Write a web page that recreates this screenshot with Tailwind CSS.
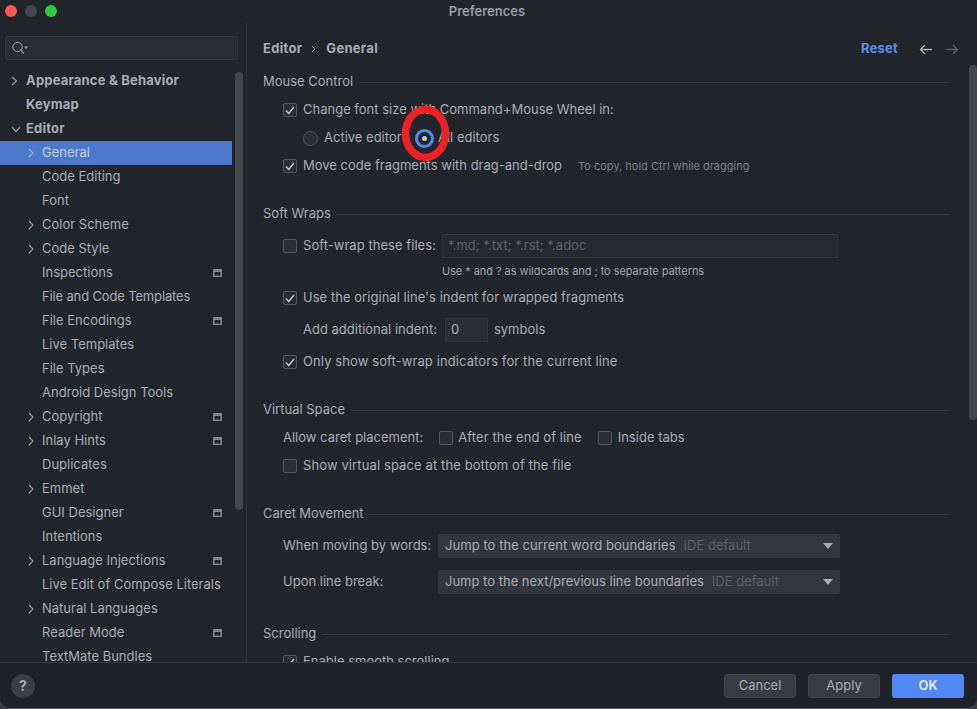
<!DOCTYPE html>
<html>
<head>
<meta charset="utf-8">
<script src="https://cdn.jsdelivr.net/npm/@tailwindcss/browser@4"></script>
</head>
<body class="bg-[#3a3c40]">
<div class="relative w-[977px] h-[709px] overflow-hidden flex flex-col bg-[#22252c] rounded-b-[10px] font-['Inter','Liberation_Sans',sans-serif] text-[13px] text-[#a9adb6] border-b border-[#55575b]">
  <!-- title bar -->
  <div class="relative h-[22px] shrink-0 flex items-center justify-center pt-px pr-[3px]">
    <div class="absolute left-[5px] top-[5px] flex gap-[8px]">
      <span class="w-3 h-3 rounded-full bg-[#fc5753]"></span>
      <span class="w-3 h-3 rounded-full bg-[#43464c]"></span>
      <span class="w-3 h-3 rounded-full bg-[#2ac940]"></span>
    </div>
    <span class="text-[13px] font-semibold text-[#9a9da4]">Preferences</span>
  </div>
  <!-- body -->
  <div class="flex h-[640px] shrink-0">
    <!-- sidebar -->
    <div class="relative w-[247px] shrink-0 border-r border-[#2f3239] overflow-hidden pt-[14px]">
      <div class="ml-[5px] w-[233px] h-[24px] flex items-center pl-[5px] bg-[#2a2d35] border border-[#32353c] rounded-[2px]">
        <svg width="18" height="16" viewBox="0 0 18 16" fill="none"><circle cx="6.5" cy="7" r="4.6" stroke="#9a9ea6" stroke-width="1"/><path d="M10 10.5l3 3" stroke="#9a9ea6" stroke-width="1.3"/><path d="M13 6.5h4l-2 2.4z" fill="#9a9ea6"/></svg>
      </div>
      <div class="mt-[8px] pt-px w-[232px]">
        <div class="h-[24px] flex items-center font-bold tracking-[0.2px]"><svg class="ml-[11px] mr-[8px]" width="7" height="10" viewBox="0 0 7 10" fill="none"><path d="M1 1l4.5 4-4.5 4" stroke="#9a9ea6" stroke-width="1.2"/></svg>Appearance &amp; Behavior</div>
        <div class="h-[24px] flex items-center font-bold tracking-[0.2px] pl-[26px]">Keymap</div>
        <div class="h-[24px] flex items-center font-bold tracking-[0.2px]"><svg class="ml-[11px] mr-[5px]" width="10" height="7" viewBox="0 0 10 7" fill="none"><path d="M1 1l4 4.5 4-4.5" stroke="#9a9ea6" stroke-width="1.2"/></svg>Editor</div>
        <div class="h-[24px] flex items-center bg-[#4d78cc] text-[#c4cddd]"><svg class="ml-[28px] mr-[8px]" width="6" height="10" viewBox="0 0 6 10" fill="none"><path d="M1 1l4 4-4 4" stroke="#a9b8d8" stroke-width="1.1"/></svg>General</div>
        <div class="h-[24px] flex items-center pl-[42px]">Code Editing</div>
        <div class="h-[24px] flex items-center pl-[42px]">Font</div>
        <div class="h-[24px] flex items-center"><svg class="ml-[28px] mr-[8px]" width="6" height="10" viewBox="0 0 6 10" fill="none"><path d="M1 1l4 4-4 4" stroke="#9a9ea6" stroke-width="1.1"/></svg>Color Scheme</div>
        <div class="h-[24px] flex items-center"><svg class="ml-[28px] mr-[8px]" width="6" height="10" viewBox="0 0 6 10" fill="none"><path d="M1 1l4 4-4 4" stroke="#9a9ea6" stroke-width="1.1"/></svg>Code Style</div>
        <div class="h-[24px] flex items-center justify-between pl-[42px] pr-[10px]">Inspections<svg width="9" height="8" viewBox="0 0 9 8"><path d="M0 0h9v8H0z" fill="#7f858f"/><path d="M1.5 3h6v3.5h-6z" fill="#22252c"/></svg></div>
        <div class="h-[24px] flex items-center pl-[42px] tracking-[-0.15px]">File and Code Templates</div>
        <div class="h-[24px] flex items-center justify-between pl-[42px] pr-[10px]">File Encodings<svg width="9" height="8" viewBox="0 0 9 8"><path d="M0 0h9v8H0z" fill="#7f858f"/><path d="M1.5 3h6v3.5h-6z" fill="#22252c"/></svg></div>
        <div class="h-[24px] flex items-center pl-[42px]">Live Templates</div>
        <div class="h-[24px] flex items-center pl-[42px]">File Types</div>
        <div class="h-[24px] flex items-center pl-[42px]">Android Design Tools</div>
        <div class="h-[24px] flex items-center justify-between pr-[10px]"><span class="flex items-center"><svg class="ml-[28px] mr-[8px]" width="6" height="10" viewBox="0 0 6 10" fill="none"><path d="M1 1l4 4-4 4" stroke="#9a9ea6" stroke-width="1.1"/></svg>Copyright</span><svg width="9" height="8" viewBox="0 0 9 8"><path d="M0 0h9v8H0z" fill="#7f858f"/><path d="M1.5 3h6v3.5h-6z" fill="#22252c"/></svg></div>
        <div class="h-[24px] flex items-center justify-between pr-[10px]"><span class="flex items-center"><svg class="ml-[28px] mr-[8px]" width="6" height="10" viewBox="0 0 6 10" fill="none"><path d="M1 1l4 4-4 4" stroke="#9a9ea6" stroke-width="1.1"/></svg>Inlay Hints</span><svg width="9" height="8" viewBox="0 0 9 8"><path d="M0 0h9v8H0z" fill="#7f858f"/><path d="M1.5 3h6v3.5h-6z" fill="#22252c"/></svg></div>
        <div class="h-[24px] flex items-center pl-[42px]">Duplicates</div>
        <div class="h-[24px] flex items-center"><svg class="ml-[28px] mr-[8px]" width="6" height="10" viewBox="0 0 6 10" fill="none"><path d="M1 1l4 4-4 4" stroke="#9a9ea6" stroke-width="1.1"/></svg>Emmet</div>
        <div class="h-[24px] flex items-center justify-between pl-[42px] pr-[10px]">GUI Designer<svg width="9" height="8" viewBox="0 0 9 8"><path d="M0 0h9v8H0z" fill="#7f858f"/><path d="M1.5 3h6v3.5h-6z" fill="#22252c"/></svg></div>
        <div class="h-[24px] flex items-center pl-[42px]">Intentions</div>
        <div class="h-[24px] flex items-center justify-between pr-[10px]"><span class="flex items-center"><svg class="ml-[28px] mr-[8px]" width="6" height="10" viewBox="0 0 6 10" fill="none"><path d="M1 1l4 4-4 4" stroke="#9a9ea6" stroke-width="1.1"/></svg>Language Injections</span><svg width="9" height="8" viewBox="0 0 9 8"><path d="M0 0h9v8H0z" fill="#7f858f"/><path d="M1.5 3h6v3.5h-6z" fill="#22252c"/></svg></div>
        <div class="h-[24px] flex items-center pl-[42px]">Live Edit of Compose Literals</div>
        <div class="h-[24px] flex items-center"><svg class="ml-[28px] mr-[8px]" width="6" height="10" viewBox="0 0 6 10" fill="none"><path d="M1 1l4 4-4 4" stroke="#9a9ea6" stroke-width="1.1"/></svg>Natural Languages</div>
        <div class="h-[24px] flex items-center justify-between pl-[42px] pr-[10px]">Reader Mode<svg width="9" height="8" viewBox="0 0 9 8"><path d="M0 0h9v8H0z" fill="#7f858f"/><path d="M1.5 3h6v3.5h-6z" fill="#22252c"/></svg></div>
        <div class="h-[24px] flex items-center pl-[42px]">TextMate Bundles</div>
      </div>
      <div class="absolute left-[235px] top-[50px] w-[8px] h-[438px] rounded-full bg-[#44474c]"></div>
    </div>
    <!-- content -->
    <div class="relative flex-1 flex flex-col overflow-hidden">
      <div class="h-[53px] shrink-0 flex items-center pt-px pl-[16px] pr-[18px]">
        <span class="font-bold tracking-[0.3px]">Editor</span>
        <svg class="ml-[9px] mr-[10px]" width="5" height="8" viewBox="0 0 5 8" fill="none"><path d="M1 1l3 3-3 3" stroke="#9a9ea6"/></svg>
        <span class="font-bold tracking-[0.3px]">General</span>
        <span class="ml-auto font-bold tracking-[0.2px] text-[#5c8fe6]">Reset</span>
        <svg class="ml-[21px]" width="13" height="11" viewBox="0 0 13 11" fill="none"><path d="M13 5.5H1.5M6 1L1.5 5.5 6 10" stroke="#a9adb6" stroke-width="1.4"/></svg>
        <svg class="ml-[14px]" width="13" height="11" viewBox="0 0 13 11" fill="none"><path d="M0 5.5h11.500M7 1l4.500 4.500L7 10" stroke="#5c5f65" stroke-width="1.4"/></svg>
      </div>
      <div class="pl-[16px] w-[702px]">
        <!-- Mouse Control -->
        <div class="h-[14px] flex items-center gap-[6px]"><span class="shrink-0">Mouse Control</span><span class="flex-1 h-px bg-[#34373e]"></span></div>
        <div class="h-[7px]"></div>
        <div class="h-[28px] flex items-center pl-[20px] gap-[6px]"><span class="w-[14px] h-[14px] rounded-[2px] border border-[#555961] bg-[#2a2d34] flex items-center justify-center"><svg width="10" height="9" viewBox="0 0 10 9" fill="none"><path d="M1 4.500l2.700 3L9 1" stroke="#c0c3ca" stroke-width="1.5"/></svg></span>Change font size with Command+Mouse Wheel in:</div>
        <div class="h-[28px] flex items-center pl-[40px]"><span class="w-[15px] h-[15px] rounded-full border border-[#555961] bg-[#2a2d34] mr-[6px]"></span><span class="w-[91px]">Active editor</span><span class="w-[19px] h-[19px] rounded-full border-[3px] border-[#5488e8] flex items-center justify-center mr-[4px]"><span class="w-[5px] h-[5px] rounded-full bg-[#c9ccd2]"></span></span>All editors</div>
        <div class="h-[28px] flex items-center pl-[20px] gap-[6px]"><span class="w-[14px] h-[14px] rounded-[2px] border border-[#555961] bg-[#2a2d34] flex items-center justify-center"><svg width="10" height="9" viewBox="0 0 10 9" fill="none"><path d="M1 4.500l2.700 3L9 1" stroke="#c0c3ca" stroke-width="1.5"/></svg></span>Move code fragments with drag-and-drop<span class="ml-[10px] text-[11px] text-[#7b7f87]">To copy, hold Ctrl while dragging</span></div>
        <div class="h-[27px]"></div>
        <!-- Soft Wraps -->
        <div class="h-[14px] flex items-center gap-[6px]"><span class="shrink-0">Soft Wraps</span><span class="flex-1 h-px bg-[#34373e]"></span></div>
        <div class="h-[13px]"></div>
        <div class="h-[24px] flex items-center pl-[20px] gap-[6px]"><span class="w-[14px] h-[14px] rounded-[2px] border border-[#555961] bg-[#2a2d34]"></span><span class="tracking-[0.05px]">Soft-wrap these files:</span><span class="w-[396px] h-[24px] border border-[#34373e] bg-[#262930] pl-[5px] flex items-center text-[#5e626a]">*.md; *.txt; *.rst; *.adoc</span></div>
        <div class="h-[26px] flex items-center pl-[179px] text-[11px] tracking-[-0.06px] text-[#a2a6ae]">Use * and ? as wildcards and ; to separate patterns</div>
        <div class="h-[28px] flex items-center pl-[20px] gap-[6px] tracking-[0.04px]"><span class="w-[14px] h-[14px] rounded-[2px] border border-[#555961] bg-[#2a2d34] flex items-center justify-center"><svg width="10" height="9" viewBox="0 0 10 9" fill="none"><path d="M1 4.500l2.700 3L9 1" stroke="#c0c3ca" stroke-width="1.5"/></svg></span>Use the original line's indent for wrapped fragments</div>
        <div class="h-[36px] flex items-center pl-[40px]">Add additional indent:<span class="ml-[8px] mr-[6px] w-[43px] h-[24px] border border-[#34373e] bg-[#2a2d35] pl-[5px] flex items-center">0</span>symbols</div>
        <div class="h-[28px] flex items-center pl-[20px] gap-[6px] tracking-[0.1px]"><span class="w-[14px] h-[14px] rounded-[2px] border border-[#555961] bg-[#2a2d34] flex items-center justify-center"><svg width="10" height="9" viewBox="0 0 10 9" fill="none"><path d="M1 4.500l2.700 3L9 1" stroke="#c0c3ca" stroke-width="1.5"/></svg></span>Only show soft-wrap indicators for the current line</div>
        <div class="h-[27px]"></div>
        <!-- Virtual Space -->
        <div class="h-[14px] flex items-center gap-[6px]"><span class="shrink-0">Virtual Space</span><span class="flex-1 h-px bg-[#34373e]"></span></div>
        <div class="h-[7px]"></div>
        <div class="h-[28px] flex items-center pl-[20px]">Allow caret placement:<span class="ml-[16px] mr-[5px] w-[14px] h-[14px] rounded-[2px] border border-[#555961] bg-[#2a2d34]"></span><span class="tracking-[0.1px]">After the end of line</span><span class="ml-[16px] mr-[6px] w-[14px] h-[14px] rounded-[2px] border border-[#555961] bg-[#2a2d34]"></span>Inside tabs</div>
        <div class="h-[28px] flex items-center pl-[20px] gap-[6px] tracking-[0.11px]"><span class="w-[14px] h-[14px] rounded-[2px] border border-[#555961] bg-[#2a2d34]"></span>Show virtual space at the bottom of the file</div>
        <div class="h-[27px]"></div>
        <!-- Caret Movement -->
        <div class="h-[14px] flex items-center gap-[6px]"><span class="shrink-0 tracking-[-0.1px]">Caret Movement</span><span class="flex-1 h-px bg-[#34373e]"></span></div>
        <div class="h-[13px]"></div>
        <div class="h-[24px] flex items-center pl-[20px] mb-[12px]"><span class="w-[155px]">When moving by words:</span><span class="w-[402px] h-[24px] rounded-[2px] bg-[#33363e] pl-[7px] pr-[7px] flex items-center"><span class="tracking-[0.06px]">Jump to the current word boundaries</span><span class="ml-[8px] text-[#5e626a]">IDE default</span><svg class="ml-auto" width="10" height="6" viewBox="0 0 10 6"><path d="M0 0h10L5 6z" fill="#a9adb6"/></svg></span></div>
        <div class="h-[24px] flex items-center pl-[20px]"><span class="w-[155px]">Upon line break:</span><span class="w-[402px] h-[24px] rounded-[2px] bg-[#33363e] pl-[7px] pr-[7px] flex items-center">Jump to the next/previous line boundaries<span class="ml-[8px] text-[#5e626a]">IDE default</span><svg class="ml-auto" width="10" height="6" viewBox="0 0 10 6"><path d="M0 0h10L5 6z" fill="#a9adb6"/></svg></span></div>
        <div class="h-[33px]"></div>
        <!-- Scrolling -->
        <div class="h-[14px] flex items-center gap-[6px]"><span class="shrink-0">Scrolling</span><span class="flex-1 h-px bg-[#34373e]"></span></div>
        <div class="h-[7px]"></div>
        <div class="h-[28px] flex items-center pl-[20px] gap-[6px]"><span class="w-[14px] h-[14px] rounded-[2px] border border-[#555961] bg-[#2a2d34] flex items-center justify-center"><svg width="10" height="9" viewBox="0 0 10 9" fill="none"><path d="M1 4.500l2.700 3L9 1" stroke="#c0c3ca" stroke-width="1.5"/></svg></span>Enable smooth scrolling</div>
      </div>
      <div class="absolute right-0 top-[43px] w-[8px] h-[355px] rounded-full bg-[#44474c]"></div>
    </div>
  </div>
  <!-- footer -->
  <div class="flex-1 flex items-center border-t border-[#34373e] bg-[#1f2229] pl-[11px] pr-[13px]">
    <span class="w-[24px] h-[24px] rounded-full bg-[#3c3f46] flex items-center justify-center font-bold text-[14px] text-[#a9adb6]">?</span>
    <span class="ml-auto w-[72px] h-[24px] rounded-[3px] bg-[#393c44] border border-[#41444b] flex items-center justify-center">Cancel</span>
    <span class="ml-[12px] w-[72px] h-[24px] rounded-[3px] bg-[#393c44] border border-[#41444b] flex items-center justify-center">Apply</span>
    <span class="ml-[12px] w-[72px] h-[24px] rounded-[3px] bg-[#5387f5] flex items-center justify-center font-semibold text-[#e8edf7]">OK</span>
  </div>
  <!-- annotation -->
  <svg class="absolute left-[400px] top-[104px]" width="52" height="60" viewBox="0 0 52 60" fill="none"><ellipse cx="25.500" cy="29.500" rx="20" ry="24" stroke="#ee2224" stroke-width="7.500"/></svg>
</div>
</body>
</html>
